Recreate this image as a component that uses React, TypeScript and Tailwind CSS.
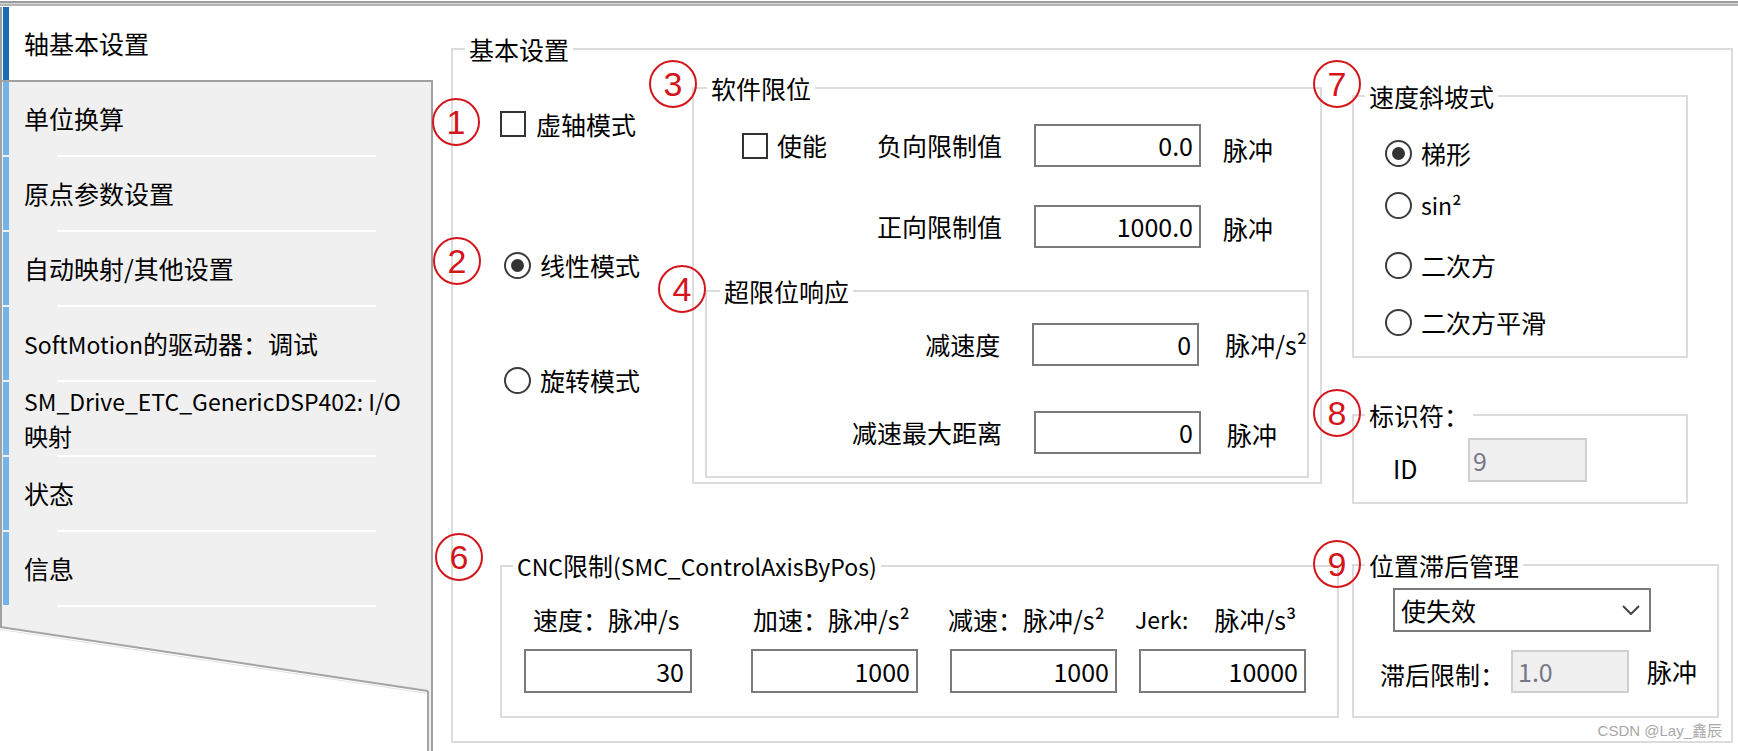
import React from "react";

function Checkbox() {
  return <div className="w-[26px] h-[26px] shrink-0 border-2 border-[#333333] bg-white" />;
}

function Radio({ checked }: { checked?: boolean }) {
  return (
    <div className="w-[27px] h-[27px] shrink-0 rounded-full border-2 border-[#3c3c3c] bg-white flex items-center justify-center">
      {checked ? <div className="w-[13px] h-[13px] rounded-full bg-[#333333]" /> : null}
    </div>
  );
}

function Field({ value, className }: { value: string; className: string }) {
  return (
    <div className={`shrink-0 border-2 border-[#7a7a7a] bg-white flex items-center justify-end pr-[6px] ${className}`}>
      {value}
    </div>
  );
}

function Disabled({ value, className }: { value: string; className: string }) {
  return (
    <div className={`shrink-0 border-2 border-[#cfcfcf] bg-[#f0f0f0] flex items-center text-[#777788] ${className}`}>
      {value}
    </div>
  );
}

function Circ({ n, className }: { n: string; className: string }) {
  return (
    <div
      className={`absolute w-[48px] h-[48px] rounded-full border-2 border-[#d4161c] flex items-center justify-center text-[#d4161c] text-[34px] leading-none font-['Liberation_Sans',sans-serif] ${className}`}
    >
      {n}
    </div>
  );
}

function NavItem({ children }: { children: React.ReactNode }) {
  return (
    <div className="flex flex-col">
      <div className="h-[73px] flex">
        <div className="ml-[1px] w-[6px] bg-[#74b3e7]" />
        <div className="pl-[15px] flex items-center whitespace-nowrap">{children}</div>
      </div>
      <div className="h-[2px] flex">
        <div className="ml-[55px] w-[319px] bg-white" />
      </div>
    </div>
  );
}

function LeftNav() {
  return (
    <div className="relative w-[433px] shrink-0 flex flex-col pt-[1px]">
      <div className="h-[73px] flex border-l-2 border-[#a0a0a0] bg-white">
        <div className="ml-[1px] w-[6px] bg-[#1c6cb8]" />
        <div className="pl-[15px] flex items-center">轴基本设置</div>
      </div>
      <div className="flex-1 bg-[#f0f0f0] border-l-2 border-t-2 border-r-2 border-[#a0a0a0] [clip-path:polygon(0_0,100%_0,100%_100%,428px_100%,428px_611px,0_547px)]">
        <NavItem>单位换算</NavItem>
        <NavItem>原点参数设置</NavItem>
        <NavItem>自动映射/其他设置</NavItem>
        <NavItem>
          <span>
            <span className="text-[23px]">SoftMotion</span>的驱动器：调试
          </span>
        </NavItem>
        <NavItem>
          <div className="flex flex-col">
            <div className="h-[34px] flex items-center text-[23px]">SM_Drive_ETC_GenericDSP402: I/O</div>
            <div className="h-[34px] flex items-center text-[24px]">映射</div>
          </div>
        </NavItem>
        <NavItem>状态</NavItem>
        <NavItem>信息</NavItem>
      </div>
      <svg className="absolute left-0 bottom-0" width="433" height="140" viewBox="0 0 433 140">
        <line x1="0" y1="16" x2="428" y2="80" stroke="#a4a4a4" strokeWidth="2" />
        <line x1="0" y1="18.5" x2="428" y2="82.5" stroke="#e2e2e2" strokeWidth="1" />
        <line x1="428" y1="80" x2="428" y2="140" stroke="#a4a4a4" strokeWidth="2" />
      </svg>
    </div>
  );
}

export default function App() {
  return (
    <div className="relative w-[1738px] h-[751px] bg-white overflow-hidden font-['Noto_Sans_CJK_SC',sans-serif] text-[25px] leading-none text-black">
      <div className="pt-[1px]">
        <div className="h-[2px] bg-[#9c9c9c]" />
        <div className="h-[1px] bg-[#d6d6d6]" />
        <div className="h-[2px] bg-[#b4b4b4]" />
      </div>
      <div className="flex h-[745px]">
        <LeftNav />
        <div className="flex-1">
          <fieldset className="ml-[18px] mt-[26px] w-[1282px] h-[711px] border-2 border-[#dcdcdc] min-w-0">
            <legend className="ml-[12px] px-[4px] leading-[34px]">基本设置</legend>
            <div className="flex h-[482px] items-start">
              {/* modes */}
              <div className="w-[239px] shrink-0 flex flex-col">
                <div className="mt-[41px] h-[34px] flex items-center pl-[47px]">
                  <Checkbox />
                  <span className="ml-[10px]">虚轴模式</span>
                </div>
                <div className="mt-[107px] h-[34px] flex items-center pl-[51px]">
                  <Radio checked />
                  <span className="ml-[9px]">线性模式</span>
                </div>
                <div className="mt-[81px] h-[34px] flex items-center pl-[51px]">
                  <Radio />
                  <span className="ml-[9px]">旋转模式</span>
                </div>
              </div>
              {/* software limit */}
              <fieldset className="mt-[5px] w-[630px] h-[413px] shrink-0 border-2 border-[#dcdcdc] min-w-0">
                <legend className="ml-[13px] px-[4px] leading-[34px]">软件限位</legend>
                <div className="mt-[19px] h-[43px] flex items-center">
                  <div className="w-[308px] pl-[48px] flex items-center justify-between">
                    <div className="flex items-center">
                      <Checkbox />
                      <span className="ml-[9px]">使能</span>
                    </div>
                    <span>负向限制值</span>
                  </div>
                  <Field value="0.0" className="ml-[32px] w-[167px] h-[43px]" />
                  <span className="ml-[22px] mt-[8px]">脉冲</span>
                </div>
                <div className="mt-[38px] h-[43px] flex items-center">
                  <div className="w-[308px] text-right">正向限制值</div>
                  <Field value="1000.0" className="ml-[32px] w-[167px] h-[43px]" />
                  <span className="ml-[22px] mt-[4px]">脉冲</span>
                </div>
                <fieldset className="ml-[11px] mt-[26px] w-[604px] h-[204px] border-2 border-[#dcdcdc] min-w-0">
                  <legend className="ml-[13px] px-[4px] leading-[34px]">超限位响应</legend>
                  <div className="mt-[15px] h-[43px] flex items-center">
                    <div className="w-[295px] text-right">减速度</div>
                    <Field value="0" className="ml-[32px] w-[167px] h-[43px]" />
                    <span className="ml-[26px] whitespace-nowrap">脉冲/s²</span>
                  </div>
                  <div className="mt-[45px] h-[43px] flex items-center">
                    <div className="w-[295px] text-right">减速最大距离</div>
                    <Field value="0" className="ml-[32px] w-[167px] h-[43px]" />
                    <span className="ml-[26px] mt-[4px]">脉冲</span>
                  </div>
                </fieldset>
              </fieldset>
              {/* right column */}
              <div className="ml-[30px] w-[336px] shrink-0 flex flex-col">
                <fieldset className="mt-[13px] w-[336px] h-[279px] border-2 border-[#dcdcdc] min-w-0">
                  <legend className="ml-[11px] px-[4px] leading-[34px]">速度斜坡式</legend>
                  <div className="mt-[23px] h-[34px] flex items-center pl-[31px]">
                    <Radio checked />
                    <span className="ml-[9px]">梯形</span>
                  </div>
                  <div className="mt-[18px] h-[34px] flex items-center pl-[31px]">
                    <Radio />
                    <span className="ml-[9px] text-[23px]">sin²</span>
                  </div>
                  <div className="mt-[26px] h-[34px] flex items-center pl-[31px]">
                    <Radio />
                    <span className="ml-[9px]">二次方</span>
                  </div>
                  <div className="mt-[23px] h-[34px] flex items-center pl-[31px]">
                    <Radio />
                    <span className="ml-[9px]">二次方平滑</span>
                  </div>
                </fieldset>
                <fieldset className="mt-[40px] w-[336px] h-[106px] border-2 border-[#dcdcdc] min-w-0">
                  <legend className="ml-[11px] px-[4px] leading-[34px]">标识符：</legend>
                  <div className="mt-[6px] h-[44px] flex items-center pl-[39px]">
                    <span className="w-[75px] mt-[16px]">ID</span>
                    <Disabled value="9" className="w-[119px] h-[44px] pl-[3px]" />
                  </div>
                </fieldset>
              </div>
            </div>
            <div className="flex items-start">
              <fieldset className="ml-[47px] w-[839px] h-[170px] shrink-0 border-2 border-[#dcdcdc] min-w-0">
                <legend className="ml-[11px] px-[4px] leading-[34px] whitespace-nowrap">
                  <span className="text-[23px]">CNC</span>限制<span className="text-[23px]">(SMC_ControlAxisByPos)</span>
                </legend>
                <div className="flex">
                  <div className="ml-[22px] w-[168px] shrink-0 flex flex-col">
                    <div className="mt-[19px] h-[34px] flex items-center pl-[9px] whitespace-nowrap">速度：脉冲/s</div>
                    <Field value="30" className="mt-[13px] w-[168px] h-[44px]" />
                  </div>
                  <div className="ml-[59px] w-[167px] shrink-0 flex flex-col">
                    <div className="mt-[19px] h-[34px] flex items-center pl-[2px] whitespace-nowrap">加速：脉冲/s²</div>
                    <Field value="1000" className="mt-[13px] w-[167px] h-[44px]" />
                  </div>
                  <div className="ml-[32px] w-[167px] shrink-0 flex flex-col">
                    <div className="mt-[19px] h-[34px] flex items-center -ml-[2px] whitespace-nowrap">减速：脉冲/s²</div>
                    <Field value="1000" className="mt-[13px] w-[167px] h-[44px]" />
                  </div>
                  <div className="ml-[22px] w-[167px] shrink-0 flex flex-col">
                    <div className="mt-[19px] h-[34px] flex items-center -ml-[4px] whitespace-nowrap">
                      <span className="text-[23px]">Jerk:</span>
                      <span className="ml-[26px]">脉冲/s³</span>
                    </div>
                    <Field value="10000" className="mt-[13px] w-[167px] h-[44px]" />
                  </div>
                </div>
              </fieldset>
              <fieldset className="ml-[13px] w-[367px] h-[170px] shrink-0 border-2 border-[#dcdcdc] min-w-0">
                <legend className="ml-[11px] px-[4px] leading-[34px]">位置滞后管理</legend>
                <div className="mt-[6px] ml-[39px] w-[258px] h-[44px] border-2 border-[#7a7a7a] bg-white flex items-center justify-between pl-[6px] pr-[9px]">
                  <span>使失效</span>
                  <svg width="18" height="10" viewBox="0 0 18 10">
                    <polyline points="1,1 9,9 17,1" fill="none" stroke="#444444" strokeWidth="2" />
                  </svg>
                </div>
                <div className="mt-[18px] h-[43px] flex items-center pl-[26px]">
                  <span className="w-[131px] mt-[6px] whitespace-nowrap">滞后限制：</span>
                  <Disabled value="1.0" className="w-[118px] h-[43px] pl-[5px]" />
                  <span className="ml-[18px]">脉冲</span>
                </div>
              </fieldset>
            </div>
          </fieldset>
        </div>
      </div>

      <Circ n="1" className="left-[432px] top-[98px]" />
      <Circ n="2" className="left-[433px] top-[237px]" />
      <Circ n="3" className="left-[649px] top-[60px]" />
      <Circ n="4" className="left-[658px] top-[265px]" />
      <Circ n="6" className="left-[435px] top-[533px]" />
      <Circ n="7" className="left-[1313px] top-[60px]" />
      <Circ n="8" className="left-[1313px] top-[389px]" />
      <Circ n="9" className="left-[1313px] top-[540px]" />

      <div className="absolute right-[16px] top-[723px] text-[15px] leading-none text-[#a8a8a8] font-['Liberation_Sans','Noto_Sans_CJK_SC',sans-serif]">
        CSDN @Lay_鑫辰
      </div>
    </div>
  );
}
